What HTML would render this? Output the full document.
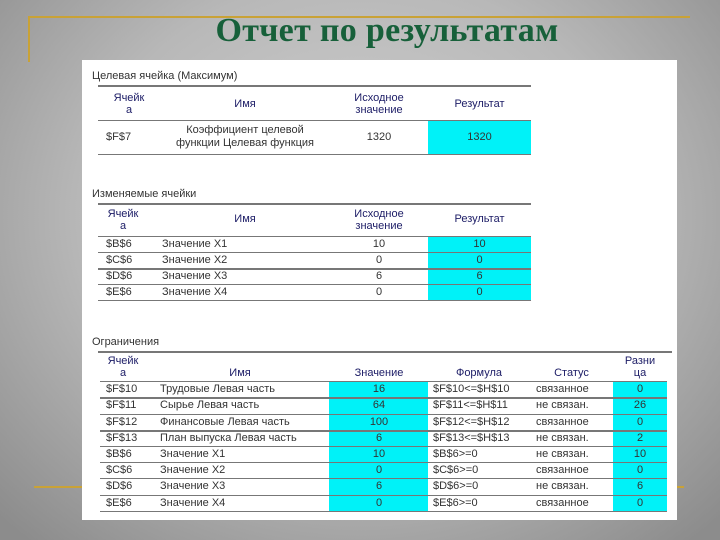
<!DOCTYPE html>
<html><head><meta charset="utf-8"><style>
*{margin:0;padding:0;box-sizing:border-box}
body{width:720px;height:540px;overflow:hidden;position:relative;font-family:"Liberation Sans",sans-serif;
background:radial-gradient(ellipse 70% 80% at 50% 40%,#d2d2d2 0%,#b8b8b8 55%,#8c8c8c 100%);}
.g{position:absolute;background:#c9a236}
.title{position:absolute;left:27px;width:720px;top:12px;text-align:center;font-family:"Liberation Serif",serif;font-size:34px;font-weight:bold;color:#17603a;letter-spacing:0.3px}
.panel{position:absolute;left:82px;top:60px;width:595px;height:460px;background:#fff}
.t{position:absolute;font-size:11px;color:#333;white-space:nowrap}
.h{color:#1c1c66;text-align:center;line-height:12px}
.c{position:absolute;background:#00f2f8}
.l{position:absolute;height:1px;background:#777}
.L{position:absolute;height:2px;background:#777}
</style></head><body>
<div class="g" style="left:28px;top:16px;width:662px;height:2px"></div>
<div class="g" style="left:28px;top:16px;width:2px;height:46px"></div>
<div class="g" style="left:34px;top:486px;width:650px;height:2px"></div>
<div class="title">Отчет по результатам</div>
<div class="panel"></div>

<div class="t" style="left:92px;top:70px">Целевая ячейка (Максимум)</div>
<div class="L" style="left:98px;top:85px;width:433px"></div>
<div class="t h" style="left:98px;top:92px;width:62px">Ячейк<br>а</div>
<div class="t h" style="left:160px;top:98px;width:170px">Имя</div>
<div class="t h" style="left:330px;top:92px;width:98px">Исходное<br>значение</div>
<div class="t h" style="left:428px;top:98px;width:103px">Результат</div>
<div class="l" style="left:98px;top:120px;width:433px"></div>
<div class="c" style="left:428px;top:121px;width:103px;height:33px"></div>
<div class="t" style="left:106px;top:131px">$F$7</div>
<div class="t" style="left:160px;top:124px;width:170px;text-align:center;line-height:13px">Коэффициент целевой<br>функции Целевая функция</div>
<div class="t" style="left:330px;top:131px;width:98px;text-align:center">1320</div>
<div class="t" style="left:428px;top:131px;width:103px;text-align:center">1320</div>
<div class="l" style="left:98px;top:154px;width:433px"></div>

<div class="t" style="left:92px;top:188px">Изменяемые ячейки</div>
<div class="L" style="left:98px;top:203px;width:433px"></div>
<div class="t h" style="left:98px;top:208px;width:50px">Ячейк<br>а</div>
<div class="t h" style="left:160px;top:213px;width:170px">Имя</div>
<div class="t h" style="left:330px;top:208px;width:98px">Исходное<br>значение</div>
<div class="t h" style="left:428px;top:213px;width:103px">Результат</div>
<div class="c" style="left:428px;top:236px;width:103px;height:64px"></div>
<div class="l" style="left:98px;top:236px;width:433px"></div>
<div class="l" style="left:98px;top:252px;width:433px"></div>
<div class="L" style="left:98px;top:268px;width:433px"></div>
<div class="l" style="left:98px;top:284px;width:433px"></div>
<div class="l" style="left:98px;top:300px;width:433px"></div>
<div class="t" style="left:106px;top:238px">$B$6</div><div class="t" style="left:162px;top:238px">Значение X1</div><div class="t" style="left:330px;top:238px;width:98px;text-align:center">10</div><div class="t" style="left:428px;top:238px;width:103px;text-align:center">10</div>
<div class="t" style="left:106px;top:254px">$C$6</div><div class="t" style="left:162px;top:254px">Значение X2</div><div class="t" style="left:330px;top:254px;width:98px;text-align:center">0</div><div class="t" style="left:428px;top:254px;width:103px;text-align:center">0</div>
<div class="t" style="left:106px;top:270px">$D$6</div><div class="t" style="left:162px;top:270px">Значение X3</div><div class="t" style="left:330px;top:270px;width:98px;text-align:center">6</div><div class="t" style="left:428px;top:270px;width:103px;text-align:center">6</div>
<div class="t" style="left:106px;top:286px">$E$6</div><div class="t" style="left:162px;top:286px">Значение X4</div><div class="t" style="left:330px;top:286px;width:98px;text-align:center">0</div><div class="t" style="left:428px;top:286px;width:103px;text-align:center">0</div>

<div class="t" style="left:92px;top:336px">Ограничения</div>
<div class="L" style="left:98px;top:351px;width:574px"></div>
<div class="t h" style="left:98px;top:355px;width:50px">Ячейк<br>а</div>
<div class="t h" style="left:150px;top:367px;width:180px">Имя</div>
<div class="t h" style="left:330px;top:367px;width:98px">Значение</div>
<div class="t h" style="left:428px;top:367px;width:102px">Формула</div>
<div class="t h" style="left:530px;top:367px;width:83px">Статус</div>
<div class="t h" style="left:613px;top:355px;width:54px">Разни<br>ца</div>
<div class="c" style="left:329px;top:381px;width:99px;height:131px"></div>
<div class="c" style="left:613px;top:381px;width:54px;height:131px"></div>
<div class="l" style="left:100px;top:381px;width:567px"></div>
<div class="L" style="left:100px;top:397px;width:567px"></div>
<div class="l" style="left:100px;top:414px;width:567px"></div>
<div class="L" style="left:100px;top:430px;width:567px"></div>
<div class="l" style="left:100px;top:446px;width:567px"></div>
<div class="l" style="left:100px;top:462px;width:567px"></div>
<div class="l" style="left:100px;top:478px;width:567px"></div>
<div class="l" style="left:100px;top:495px;width:567px"></div>
<div class="l" style="left:100px;top:511px;width:567px"></div>

<div class="t" style="left:106px;top:383px">$F$10</div><div class="t" style="left:160px;top:383px">Трудовые Левая часть</div><div class="t" style="left:330px;top:383px;width:98px;text-align:center">16</div><div class="t" style="left:433px;top:383px">$F$10&lt;=$H$10</div><div class="t" style="left:536px;top:383px">связанное</div><div class="t" style="left:613px;top:383px;width:54px;text-align:center">0</div>
<div class="t" style="left:106px;top:399px">$F$11</div><div class="t" style="left:160px;top:399px">Сырье Левая часть</div><div class="t" style="left:330px;top:399px;width:98px;text-align:center">64</div><div class="t" style="left:433px;top:399px">$F$11&lt;=$H$11</div><div class="t" style="left:536px;top:399px">не связан.</div><div class="t" style="left:613px;top:399px;width:54px;text-align:center">26</div>
<div class="t" style="left:106px;top:416px">$F$12</div><div class="t" style="left:160px;top:416px">Финансовые Левая часть</div><div class="t" style="left:330px;top:416px;width:98px;text-align:center">100</div><div class="t" style="left:433px;top:416px">$F$12&lt;=$H$12</div><div class="t" style="left:536px;top:416px">связанное</div><div class="t" style="left:613px;top:416px;width:54px;text-align:center">0</div>
<div class="t" style="left:106px;top:432px">$F$13</div><div class="t" style="left:160px;top:432px">План выпуска Левая часть</div><div class="t" style="left:330px;top:432px;width:98px;text-align:center">6</div><div class="t" style="left:433px;top:432px">$F$13&lt;=$H$13</div><div class="t" style="left:536px;top:432px">не связан.</div><div class="t" style="left:613px;top:432px;width:54px;text-align:center">2</div>
<div class="t" style="left:106px;top:448px">$B$6</div><div class="t" style="left:160px;top:448px">Значение X1</div><div class="t" style="left:330px;top:448px;width:98px;text-align:center">10</div><div class="t" style="left:433px;top:448px">$B$6&gt;=0</div><div class="t" style="left:536px;top:448px">не связан.</div><div class="t" style="left:613px;top:448px;width:54px;text-align:center">10</div>
<div class="t" style="left:106px;top:464px">$C$6</div><div class="t" style="left:160px;top:464px">Значение X2</div><div class="t" style="left:330px;top:464px;width:98px;text-align:center">0</div><div class="t" style="left:433px;top:464px">$C$6&gt;=0</div><div class="t" style="left:536px;top:464px">связанное</div><div class="t" style="left:613px;top:464px;width:54px;text-align:center">0</div>
<div class="t" style="left:106px;top:480px">$D$6</div><div class="t" style="left:160px;top:480px">Значение X3</div><div class="t" style="left:330px;top:480px;width:98px;text-align:center">6</div><div class="t" style="left:433px;top:480px">$D$6&gt;=0</div><div class="t" style="left:536px;top:480px">не связан.</div><div class="t" style="left:613px;top:480px;width:54px;text-align:center">6</div>
<div class="t" style="left:106px;top:497px">$E$6</div><div class="t" style="left:160px;top:497px">Значение X4</div><div class="t" style="left:330px;top:497px;width:98px;text-align:center">0</div><div class="t" style="left:433px;top:497px">$E$6&gt;=0</div><div class="t" style="left:536px;top:497px">связанное</div><div class="t" style="left:613px;top:497px;width:54px;text-align:center">0</div>
</body></html>
